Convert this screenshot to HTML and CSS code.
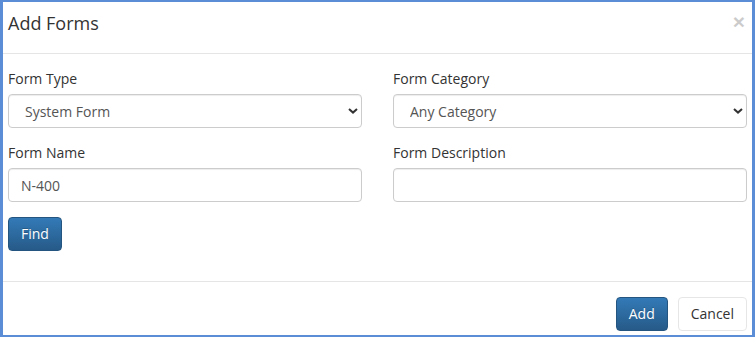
FILE: index.html
```html
<!DOCTYPE html>
<html lang="en">
<head>
    <meta charset="UTF-8">
    <title>Add Forms</title>
    <link rel="stylesheet" href="styles.css">
</head>
<body>
    <div class="modal">
        <div class="modal-header">
            <h4 class="modal-title">Add Forms</h4>
            <button class="close" type="button">&times;</button>
        </div>

        <div class="modal-body">
            <div class="form-row">
                <div class="form-group">
                    <label for="form-type">Form Type</label>
                    <div class="select-wrap">
                        <select id="form-type" class="form-control">
                            <option>System Form</option>
                        </select>
                        <svg class="chevron" width="10" height="6" viewBox="0 0 10 6">
                            <path d="M1 1 L5 4.6 L9 1" fill="none" stroke="#333" stroke-width="2"/>
                        </svg>
                    </div>
                </div>
                <div class="form-group">
                    <label for="form-category">Form Category</label>
                    <div class="select-wrap">
                        <select id="form-category" class="form-control">
                            <option>Any Category</option>
                        </select>
                        <svg class="chevron" width="10" height="6" viewBox="0 0 10 6">
                            <path d="M1 1 L5 4.6 L9 1" fill="none" stroke="#333" stroke-width="2"/>
                        </svg>
                    </div>
                </div>
            </div>

            <div class="form-row">
                <div class="form-group">
                    <label for="form-name">Form Name</label>
                    <input id="form-name" class="form-control text" type="text" value="N-400">
                </div>
                <div class="form-group">
                    <label for="form-desc">Form Description</label>
                    <input id="form-desc" class="form-control text" type="text">
                </div>
            </div>

            <button class="btn btn-primary" type="button">Find</button>
        </div>

        <div class="modal-footer">
            <button class="btn btn-primary" type="button">Add</button>
            <button class="btn btn-default" type="button">Cancel</button>
        </div>
    </div>
</body>
</html>
```

FILE: styles.css
```css
* {
    box-sizing: border-box;
}

body {
    margin: 0;
    font-family: "Open Sans", "Liberation Sans", sans-serif;
    font-size: 14px;
    color: #333;
    background: #fff;
}

/* modal frame */
.modal {
    width: 755px;
    height: 337px;
    border: 3px solid #5a8dd6;
    border-top-width: 2px;
    border-bottom-width: 2px;
    overflow: hidden;
    background: #fff;
}

.modal-header {
    display: flex;
    justify-content: space-between;
    align-items: flex-start;
    padding: 9px 5px 17px;
    border-bottom: 1px solid #e5e5e5;
}

.modal-title {
    margin: 0;
    font-size: 18px;
    font-weight: 400;
    line-height: 25px;
    color: #333;
}

.close {
    border: none;
    background: none;
    padding: 0;
    margin: 0 2px 0 0;
    font-family: "Liberation Sans", sans-serif;
    font-size: 21px;
    font-weight: 700;
    line-height: 21px;
    color: #000;
    opacity: 0.2;
    cursor: pointer;
}

/* body */
.modal-body {
    padding: 15px 5px 30px;
}

.form-row {
    display: grid;
    grid-template-columns: 1fr 1fr;
    column-gap: 31px;
}

.form-group {
    margin-bottom: 15px;
}

.form-group label {
    display: block;
    margin-bottom: 5px;
    font-weight: 500;
    line-height: 20px;
    color: #333;
}

.form-control {
    display: block;
    width: 100%;
    height: 34px;
    padding: 6px 12px;
    font-family: inherit;
    font-size: 14px;
    color: #555;
    background: #fff;
    border: 1px solid #ccc;
    border-radius: 4px;
    box-shadow: inset 0 1px 1px rgba(0, 0, 0, 0.075);
}

.select-wrap {
    position: relative;
}

.select-wrap select {
    appearance: none;
    -webkit-appearance: none;
    padding-left: 16px;
}

.select-wrap .chevron {
    position: absolute;
    right: 4px;
    top: 14px;
    pointer-events: none;
}

/* buttons */
.btn {
    display: inline-block;
    height: 34px;
    padding: 6px 12px;
    font-family: inherit;
    font-size: 14px;
    line-height: 20px;
    border: 1px solid transparent;
    border-radius: 4px;
    cursor: pointer;
}

.btn-primary {
    color: #fff;
    background: linear-gradient(to bottom, #337ab7 0, #265a88 100%);
    border-color: #245580;
    text-shadow: 0 -1px 0 rgba(0, 0, 0, 0.2);
}

.btn-default {
    color: #333;
    background: #fff;
    border-color: #e6e6e6;
}

/* footer */
.modal-footer {
    display: flex;
    justify-content: flex-end;
    gap: 10px;
    padding: 15px 5px;
    border-top: 1px solid #e5e5e5;
}
```
